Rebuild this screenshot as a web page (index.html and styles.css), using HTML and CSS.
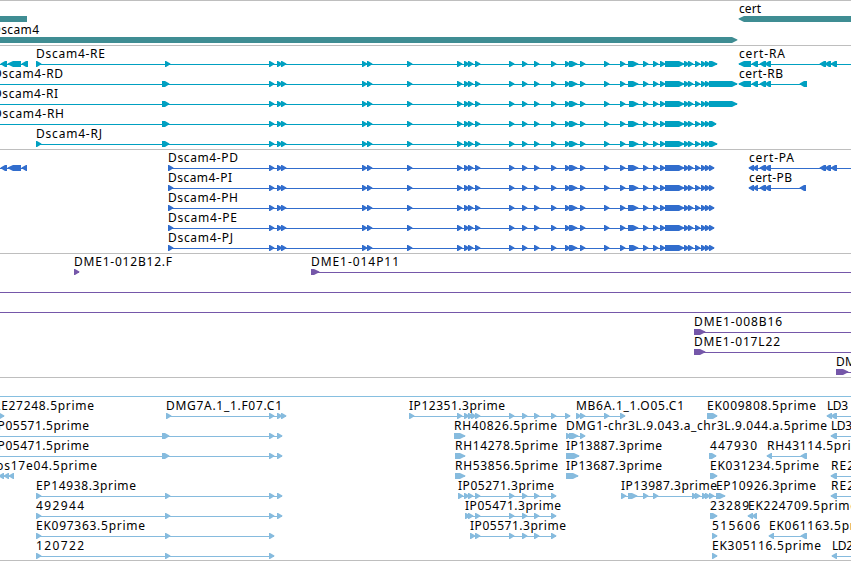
FILE: index.html
```html
<!DOCTYPE html>
<html lang="en">
<head>
<meta charset="utf-8">
<title>Dscam4 region</title>
<link rel="stylesheet" href="styles.css">
</head>
<body>
<main class="browser">
  <section class="track genes" data-track="genes"></section>
  <section class="track transcripts" data-track="transcripts"></section>
  <section class="track proteins" data-track="proteins"></section>
  <section class="track clones" data-track="clones"></section>
  <section class="track coverage"></section>
  <section class="track ests" data-track="ests"></section>
</main>
<script src="tracks.js"></script>
</body>
</html>
```
FILE: styles.css
```css
* { box-sizing: border-box; }
body { margin: 0; background: #fff; overflow: hidden; }
.browser {
  display: flex;
  flex-direction: column;
  width: 851px;
  height: 561px;
  border-top: 1px solid #bebebe;
}
.track { flex: none; border-bottom: 1px solid #bebebe; overflow: hidden; }
.track svg { display: block; width: 851px; height: 100%; fill: currentColor; }
.genes { height: 45px; color: #3f8d93; }
.transcripts { height: 104px; color: #00a0c1; }
.proteins { height: 104px; color: #316dcd; }
.clones { height: 124px; color: #7557a9; }
.coverage { height: 19px; border-bottom-color: #86bfe0; }
.ests { height: 164px; color: #86bbde; }
.label { font: 12px "Noto Sans", "Open Sans", sans-serif; fill: #000; }
.intron { shape-rendering: crispEdges; }
```
FILE: tracks.js
```js
// Row: [line offset, [features]]; feature: [label, labelX, labelWidth, lineStart, lineEnd, exons]
// Exon: [start, end, direction], direction 1 forward, -1 reverse, 0 blunt.
const W = 851;
const fwd = (...a) => a.map(x => Array.isArray(x) ? [x[0], x[1], 1] : [x, x + 5, 1]);
const rev = (...a) => a.map(([s, e]) => [s, e, -1]);
const core = block => [269, 277, 281, 362, 367, 407, 457, 464, 468, 475, 509, 522, 534, 551,
  565, [569, 577], 580, 604, 620, [block, 638], 643, 653, 660, [665, 684], 684, 688, 695, 701, 705];

const transcript = (name, x, w, start, first, block, end, last = 709) =>
  [name, x, w, start, end, fwd(...first, ...core(block), [last, end])];
const protein = (name, w, block) => [name, 168, w, 168, 714, fwd(168, ...core(block), 709)];

const tracks = {
  genes: [
    [18, [['', 0, 0, 0, 0, [[-20, 27, 0]]], ['cert', 739, 22, 0, 0, rev([739, 880])]], 12],
    [39, [['Dscam4', -8, 47, 0, 0, [[-20, 737, 1]]]], 33]
  ],
  transcripts: [
    [18, [
      ['', 0, 0, 0, 27, rev([1, 7], [8, 21], [22, 28])],
      transcript('Dscam4-RE', 36, 69, 36, [36, 165], 628, 717),
      ['cert-RA', 739, 46, 739, W, rev([739, 751], [752, 758], [760, 766], [765, 771], [820, 826], [825, 831], [831, 837])]
    ]],
    [38, [
      transcript('Dscam4-RD', -7, 70, 0, [[162, 169]], 628, 737),
      ['cert-RB', 739, 44, 739, 807, rev([739, 751], [752, 758], [760, 766], [765, 771], [800, 807])]
    ]],
    [58, [transcript('Dscam4-RI', -7, 65, 0, [[162, 169]], 629, 737)]],
    [78, [transcript('Dscam4-RH', -7, 71, 0, [[162, 169]], 628, 716)]],
    [98, [transcript('Dscam4-RJ', 36, 66, 36, [36, [162, 169]], 629, 717)]]
  ],
  proteins: [
    [18, [
      ['', 0, 0, 0, 27, rev([1, 7], [8, 21], [22, 27])],
      protein('Dscam4-PD', 70, 628),
      ['cert-PA', 749, 45, 749, W, rev([749, 754], [753, 758], [760, 766], [765, 771], [820, 826], [825, 831], [831, 837])]
    ]],
    [38, [
      protein('Dscam4-PI', 64, 629),
      ['cert-PB', 749, 43, 749, 806, rev([749, 754], [753, 758], [760, 766], [765, 771], [800, 806])]
    ]],
    [58, [protein('Dscam4-PH', 70, 628)]],
    [78, [protein('Dscam4-PE', 69, 628)]],
    [98, [protein('Dscam4-PJ', 65, 629)]]
  ],
  clones: [
    [18, [['DME1-012B12.F', 74, 98, 74, 79, fwd(74)], ['DME1-014P11', 311, 88, 311, W, fwd([311, 319])]]],
    [38, [['', 0, 0, 0, W, []]]],
    [58, [['', 0, 0, 0, W, []]]],
    [78, [['DME1-008B16', 694, 88, 694, W, fwd([694, 705])]]],
    [98, [['DME1-017L22', 694, 86, 694, W, fwd([694, 705])]]],
    [118, [['DME1', 836, 34, 836, W, fwd([836, 848])]]]
  ],
  ests: [
    [19, [
      ['RE27248.5prime', -7, 101, 0, 4, fwd(-1)],
      ['DMG7A.1_1.F07.C1', 166, 116, 166, 286, fwd(166, 269, 277, 281)],
      ['IP12351.3prime', 409, 96, 409, 570, fwd(409, 457, 464, 468, 471, 475, 509, 522, 534, 551, 565)],
      ['MB6A.1_1.O05.C1', 576, 108, 576, 625, fwd(576, 580, 604, 620)],
      ['EK009808.5prime', 707, 109, 707, 717, fwd([707, 714], [710, 717])],
      ['LD3', 827, 21, 827, W, rev([827, 832], [831, 837])]
    ]],
    [39, [
      ['IP05571.5prime', -7, 96, 0, 169, fwd([162, 169])],
      ['', 0, 0, 169, 282, fwd(269, 277)],
      ['RH40826.5prime', 454, 103, 454, 465, fwd([454, 465])],
      ['DMG1-chr3L.9.043.a_chr3L.9.044.a.5prime', 566, 261, 566, 585, fwd(566, [569, 578], 580)],
      ['LD3', 831, 21, 831, W, rev([831, 837])]
    ]],
    [59, [
      ['IP05471.5prime', -7, 96, 0, 282, fwd([162, 169], 269, 277)],
      ['RH14278.5prime', 455, 103, 455, 465, fwd([455, 465])],
      ['IP13887.3prime', 566, 96, 566, 579, fwd([566, 579])],
      ['447930', 710, 47, 709, 716, fwd([709, 716])],
      ['RH43114.5prime', 767, 103, 767, 807, rev([767, 772], [801, 807])]
    ]],
    [79, [
      ['bs17e04.5prime', -4, 101, 0, 14, rev([-1, 4], [4, 9], [9, 14])],
      ['RH53856.5prime', 455, 103, 455, 465, fwd([455, 465])],
      ['IP13687.3prime', 566, 96, 566, 578, fwd([566, 578])],
      ['EK031234.5prime', 710, 109, 710, 717, fwd([710, 717])],
      ['RE2', 831, 23, 831, W, rev([831, 837])]
    ]],
    [99, [
      ['EP14938.3prime', 36, 100, 36, 282, fwd(36, 165, 269, 277)],
      ['IP05271.3prime', 458, 96, 458, 556, fwd(458, 464, 468, 475, 509, 522, 534, 551)],
      ['IP13987.3prime', 621, 96, 621, 725, fwd(621, [628, 637], 643, 653, 692, 695, 702, 705, 709, [716, 725])],
      ['EP10926.3prime', 716, 100, 716, 725, []],
      ['RE2', 831, 23, 831, W, rev([831, 837])]
    ]],
    [119, [
      ['492944', 36, 48, 36, 282, fwd(36, 165, 269, 277)],
      ['IP05471.3prime', 465, 96, 465, 556, fwd(465, 468, 475, 509, 522, 534, 551)],
      ['23289', 710, 39, 710, 717, fwd([710, 717])],
      ['EK224709.5prime', 748, 109, 748, 757, rev([748, 753], [752, 757])]
    ]],
    [139, [
      ['EK097363.5prime', 36, 109, 36, 274, fwd(36, 165, 269)],
      ['IP05571.3prime', 470, 96, 470, 556, fwd(470, 475, 509, 522, 534, 551)],
      ['515606', 712, 48, 712, 717, fwd(712)],
      ['EK061163.5prime', 769, 109, 769, 807, rev([769, 774], [801, 807])]
    ]],
    [159, [
      ['120722', 36, 48, 36, 274, fwd(36, 165, 269)],
      ['EK305116.5prime', 712, 109, 712, 717, fwd(712)],
      ['LD2', 832, 21, 832, W, rev([832, 837])]
    ]]
  ]
};

function exonShape([s, e, dir], y) {
  const t = y - 3, b = y + 3;
  const head = Math.min(e - s > 7 ? 6 : 5, e - s);
  const shoulder = dir > 0 ? e - head + 1 : s + head - 1;
  if (dir === 0) return `M${s} ${t}H${e}V${b}H${s}Z`;
  return dir > 0
    ? `M${s} ${t}H${shoulder}L${e + .4} ${y - .5}V${y + .3}L${shoulder} ${b}H${s}Z`
    : `M${e} ${t}H${shoulder}L${s - .4} ${y - .5}V${y + .3}L${shoulder} ${b}H${e}Z`;
}

for (const section of document.querySelectorAll('[data-track]')) {
  let out = '';
  for (const [y, features, baseline = y - 6] of tracks[section.dataset.track]) {
    for (const [name, x, width, from, to, exons] of features) {
      if (to > from) out += `<rect class="intron" x="${from}" y="${y}" width="${to - from}" height="1"/>`;
      for (const exon of exons) out += `<path d="${exonShape(exon, y)}"/>`;
      if (name) out += `<text class="label" x="${x}" y="${baseline}" textLength="${width}">${name}</text>`;
    }
  }
  section.innerHTML = `<svg xmlns="http://www.w3.org/2000/svg">${out}</svg>`;
}
```
